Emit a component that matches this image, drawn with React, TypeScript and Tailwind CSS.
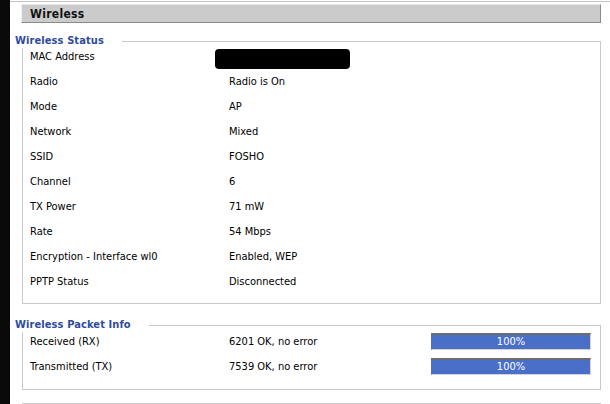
const FONT = { fontFamily: '"DejaVu Sans Condensed", "DejaVu Sans", sans-serif' };

const STATUS: [string, string][] = [
  ["MAC Address", ""],
  ["Radio", "Radio is On"],
  ["Mode", "AP"],
  ["Network", "Mixed"],
  ["SSID", "FOSHO"],
  ["Channel", "6"],
  ["TX Power", "71 mW"],
  ["Rate", "54 Mbps"],
  ["Encryption - Interface wl0", "Enabled, WEP"],
  ["PPTP Status", "Disconnected"],
];

const PACKETS = [
  { label: "Received (RX)", value: "6201 OK, no error", pct: 100 },
  { label: "Transmitted (TX)", value: "7539 OK, no error", pct: 100 },
];

function Legend({ title }: { title: string }) {
  return (
    <div className="flex items-end h-[14px]">
      <span className="-ml-[7px] self-center text-[11px] font-bold leading-[14px] text-[#2f4c9c] whitespace-nowrap tracking-[0.1px]">
        {title}
      </span>
      <div className="flex-1 ml-[18px] h-[7px] border-t border-r border-[#c9c9c9]" />
    </div>
  );
}

function Bar({ pct }: { pct: number }) {
  return (
    <div className="w-[160px] h-[17px] border-t-2 border-l border-t-[#6d6d6d] border-l-[#6d6d6d] border-b border-r border-b-[#d4d4d4] border-r-[#d4d4d4] bg-white">
      <div
        className="h-full bg-[#4a6fc8] text-white text-[11px] leading-[14px] text-center"
        style={{ width: `${pct}%` }}
      >
        {pct}%
      </div>
    </div>
  );
}

export default function App() {
  return (
    <div className="flex w-[610px] h-[404px] overflow-hidden bg-white text-black" style={FONT}>
      <div className="w-[10px] bg-[#0a0a0a] flex-shrink-0" />
      <div className="flex-1 flex flex-col">
        <div className="h-[1px] mt-[1px] bg-[#c4c4c4]" />
        <div className="flex pt-[2px]">
          <div className="ml-[11px] w-[580px] h-[19px] bg-[#cbcbcb] border-t border-l border-t-[#e8e8e8] border-l-[#f0f0f0] border-b border-r border-b-[#8a8a8a] border-r-[#8a8a8a] pl-[8px] flex items-center">
            <span className="text-[12px] font-bold tracking-[0.3px] text-[#111]">Wireless</span>
          </div>
        </div>

        {/* Wireless Status */}
        <div className="ml-[12px] w-[579px] mt-[11px]">
          <Legend title="Wireless Status" />
          <div className="border-l border-r border-b border-[#c9c9c9] pb-[5px]">
            {STATUS.map(([label, value]) => (
              <div key={label} className="flex h-[25px] items-start text-[11px] leading-[18px]">
                <div className="w-[206px] pl-[7px] flex-shrink-0">{label}</div>
                {label === "MAC Address" ? (
                  <div className="-ml-[14px] mt-[1px] w-[135px] h-[20px] rounded-[4px] bg-black" />
                ) : (
                  <div>{value}</div>
                )}
              </div>
            ))}
          </div>
        </div>

        {/* Wireless Packet Info */}
        <div className="ml-[12px] w-[579px] mt-[14px]">
          <Legend title="Wireless Packet Info" />
          <div className="border-l border-r border-b border-[#c9c9c9] pt-[1px] pb-[6px]">
            {PACKETS.map((p) => (
              <div key={p.label} className="flex h-[25px] items-start text-[11px] leading-[18px]">
                <div className="w-[206px] pl-[7px] flex-shrink-0">{p.label}</div>
                <div className="w-[202px] flex-shrink-0">{p.value}</div>
                <Bar pct={p.pct} />
              </div>
            ))}
          </div>
        </div>

        <div className="ml-[12px] w-[579px] mt-[13px] border-t border-[#c9c9c9]" />
      </div>
    </div>
  );
}
